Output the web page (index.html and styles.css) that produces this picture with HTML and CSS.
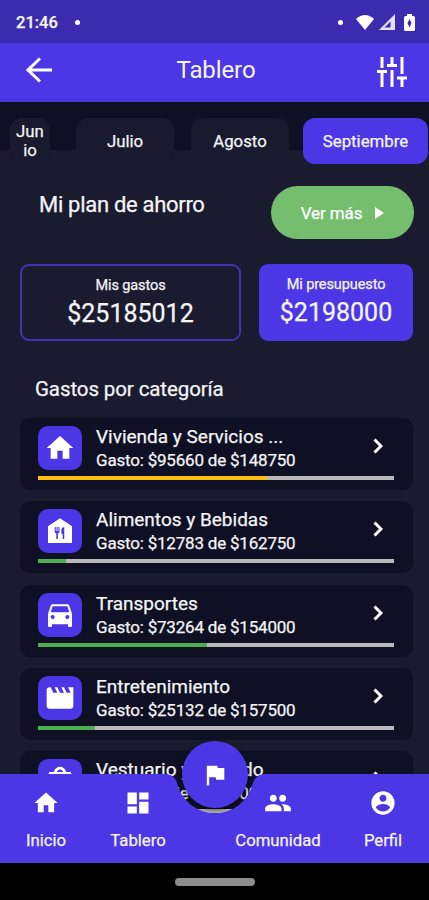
FILE: index.html
```html
<!DOCTYPE html>
<html lang="es">
<head>
    <meta charset="UTF-8">
    <meta name="viewport" content="width=device-width, initial-scale=1.0">
    <title>Tablero</title>
    <link rel="stylesheet" href="styles.css">
</head>
<body>

<!-- Status bar -->
<div class="status-bar">
    <span class="time">21:46</span>
    <span class="dot"></span>
    <span class="dot dot-right"></span>
    <svg class="wifi" viewBox="0 0 18 15"><path d="M9 15L0 4Q9-4 18 4Z"/></svg>
    <svg class="signal" viewBox="0 0 16 16"><path fill-rule="evenodd" d="M0 16L16 0V16ZM5.500 13.500H11.500V7.500Z"/></svg>
    <svg class="battery" viewBox="0 0 11 17"><path fill-rule="evenodd" d="M3 2V0H8V2H9.500Q11 2 11 3.500V15.500Q11 17 9.500 17H1.500Q0 17 0 15.500V3.500Q0 2 1.500 2ZM5.500 5L3.500 9L5.500 13.500L7.500 9Z"/></svg>
</div>

<!-- Header -->
<header>
    <svg class="back" viewBox="0 0 26 26"><path d="M26 13H2M14 1.500L2 13L14 24.500"/></svg>
    <h1>Tablero</h1>
    <svg class="filters" viewBox="0 0 30 30"><path d="M5 0V11M0 14.500H10M5 14.500V30M15 0V8M10 8.500H20M15 13V30M25 0V17M20 21H30M25 21V30"/></svg>
</header>

<!-- Months -->
<div class="months">
    <div class="month month-first">Jun<br>io</div>
    <div class="month">Julio</div>
    <div class="month">Agosto</div>
    <div class="month active">Septiembre</div>
</div>

<main>
    <div class="plan">
        <h2>Mi plan de ahorro</h2>
        <button class="more">Ver más <svg viewBox="0 0 9 12"><path d="M0 0L9 6L0 12Z"/></svg></button>
    </div>

    <div class="totals">
        <div class="total spent">
            <span class="total-label">Mis gastos</span>
            <span class="total-value">$25185012</span>
        </div>
        <div class="total budget">
            <span class="total-label">Mi presupuesto</span>
            <span class="total-value">$2198000</span>
        </div>
    </div>

    <h3>Gastos por categoría</h3>

    <!-- Categories -->
    <div class="categories">
        <div class="category">
            <div class="row">
                <div class="icon"><svg viewBox="0 0 24 24"><path d="M10 20v-6h4v6h5v-8h3L12 3 2 12h3v8z"/></svg></div>
                <div class="info">
                    <span class="name">Vivienda y Servicios ...</span>
                    <span class="amount">Gasto: $95660 de $148750</span>
                </div>
                <svg class="chevron" viewBox="0 0 10 16"><path d="M1.500 1.500L8 8L1.500 14.500"/></svg>
            </div>
            <div class="bar"><div class="fill warning" style="width: 64.3%"></div></div>
        </div>
        <div class="category">
            <div class="row">
                <div class="icon"><svg viewBox="0 0 24 24"><path fill-rule="evenodd" d="M12 2.500L3 8.500V21H21V8.500ZM8 9H8.800V12H9.400V9H10.200V12H10.800V9H11.600V12.500Q11.600 13.600 10.400 13.800V18H9.200V13.800Q8 13.600 8 12.500ZM15.200 9V18H14V14H13V11Q13.200 9.300 15.200 9Z"/></svg></div>
                <div class="info">
                    <span class="name">Alimentos y Bebidas</span>
                    <span class="amount">Gasto: $12783 de $162750</span>
                </div>
                <svg class="chevron" viewBox="0 0 10 16"><path d="M1.500 1.500L8 8L1.500 14.500"/></svg>
            </div>
            <div class="bar"><div class="fill" style="width: 7.9%"></div></div>
        </div>
        <div class="category">
            <div class="row">
                <div class="icon"><svg viewBox="0 0 24 24"><path d="M18.920 5.010C18.720 4.420 18.160 4 17.500 4h-11c-.66 0-1.210.42-1.420 1.010L3 11v9c0 .55.45 1 1 1h1c.55 0 1-.45 1-1v-1h12v1c0 .55.45 1 1 1h1c.55 0 1-.45 1-1v-9l-2.080-5.990zM6.500 15c-.83 0-1.500-.67-1.500-1.500S5.670 12 6.500 12s1.500.67 1.500 1.500S7.330 15 6.500 15zm11 0c-.83 0-1.500-.67-1.500-1.500s.67-1.500 1.500-1.500 1.500.67 1.500 1.500-.67 1.500-1.500 1.500zM5 10l1.500-4.500h11L19 10H5z"/></svg></div>
                <div class="info">
                    <span class="name">Transportes</span>
                    <span class="amount">Gasto: $73264 de $154000</span>
                </div>
                <svg class="chevron" viewBox="0 0 10 16"><path d="M1.500 1.500L8 8L1.500 14.500"/></svg>
            </div>
            <div class="bar"><div class="fill" style="width: 47.6%"></div></div>
        </div>
        <div class="category">
            <div class="row">
                <div class="icon"><svg viewBox="0 0 24 24"><path d="M18 4l2 4h-3l-2-4h-2l2 4h-3l-2-4H8l2 4H7L5 4H4c-1.100 0-1.990.9-1.990 2L2 18c0 1.100.9 2 2 2h16c1.100 0 2-.9 2-2V4h-4z"/></svg></div>
                <div class="info">
                    <span class="name">Entretenimiento</span>
                    <span class="amount">Gasto: $25132 de $157500</span>
                </div>
                <svg class="chevron" viewBox="0 0 10 16"><path d="M1.500 1.500L8 8L1.500 14.500"/></svg>
            </div>
            <div class="bar"><div class="fill" style="width: 16%"></div></div>
        </div>
        <div class="category">
            <div class="row">
                <div class="icon"><svg viewBox="0 0 24 24"><path fill-rule="evenodd" d="M19 5.300h-2.400C16 2.800 14.200 1.300 12 1.300S8 2.800 7.400 5.300H5c-1.100 0-1.500.4-1.500 1.200V20c0 1.100.9 2 2 2h13c1.100 0 2-.9 2-2V6.500c0-.8-.4-1.200-1.500-1.200zM12 3.300c1.100 0 2 .8 2.400 2H9.600c.4-1.200 1.300-2 2.400-2z"/></svg></div>
                <div class="info">
                    <span class="name">Vestuario y Calzado</span>
                    <span class="amount">Gasto: $0 de $105000</span>
                </div>
                <svg class="chevron" viewBox="0 0 10 16"><path d="M1.500 1.500L8 8L1.500 14.500"/></svg>
            </div>
            <div class="bar"><div class="fill" style="width: 0%"></div></div>
        </div>
    </div>
</main>

<!-- Bottom navigation -->
<div class="bottom">
    <button class="fab"><svg viewBox="0 0 24 24"><path d="M14.400 6L14 4H5v17h2v-7h5.600l.4 2h7V6z"/></svg></button>
    <svg class="nav-shape" viewBox="0 0 429 89"><path d="M0 0H163C172 0 175 3 177 9A39 39 0 0 0 253 9C255 3 258 0 267 0H429V89H0Z"/></svg>
    <nav>
        <a class="nav-home"><svg viewBox="0 0 24 24"><path d="M10 20v-6h4v6h5v-8h3L12 3 2 12h3v8z"/></svg>Inicio</a>
        <a class="nav-board"><svg viewBox="0 0 24 24"><path d="M3 13h8V3H3v10zm0 8h8v-6H3v6zm10 0h8V11h-8v10zm0-18v6h8V3h-8z"/></svg>Tablero</a>
        <a class="nav-people"><svg viewBox="0 0 24 24"><path d="M16 11c1.660 0 2.990-1.340 2.990-3S17.660 5 16 5c-1.660 0-3 1.340-3 3s1.340 3 3 3zm-8 0c1.660 0 2.990-1.340 2.990-3S9.660 5 8 5C6.340 5 5 6.340 5 8s1.340 3 3 3zm0 2c-2.330 0-7 1.170-7 3.500V19h14v-2.500c0-2.330-4.670-3.500-7-3.500zm8 0c-.29 0-.62.020-.97.050 1.160.84 1.970 1.970 1.970 3.450V19h6v-2.500c0-2.330-4.670-3.500-7-3.500z"/></svg>Comunidad</a>
        <a class="nav-profile"><svg viewBox="0 0 24 24"><path d="M12 2C6.480 2 2 6.480 2 12s4.480 10 10 10 10-4.480 10-10S17.520 2 12 2zm0 3c1.660 0 3 1.340 3 3s-1.340 3-3 3-3-1.340-3-3 1.340-3 3-3zm0 14.200c-2.500 0-4.710-1.280-6-3.220.03-1.990 4-3.080 6-3.080 1.990 0 5.970 1.090 6 3.080-1.290 1.940-3.500 3.220-6 3.220z"/></svg>Perfil</a>
    </nav>
    <div class="gesture"><div class="pill"></div></div>
</div>

</body>
</html>
```
FILE: styles.css
```css
* {
    margin: 0;
    padding: 0;
    box-sizing: border-box;
}
body {
    position: relative;
    height: 900px;
    overflow: hidden;
    font-family: Roboto, sans-serif;
    background-color: #1b1b2f;
    color: #f4f4f6;
    -webkit-text-stroke: 0.25px;
}
svg {
    display: block;
    fill: white;
}
h1, h2, h3 {
    font-weight: 400;
}
.status-bar {
    height: 43px;
    padding: 1px 14px 0 16px;
    display: flex;
    align-items: center;
    background-color: #3b2bae;
}
.time {
    width: 59px;
    font-size: 16.5px;
    font-weight: 500;
}
.dot {
    width: 5px;
    height: 5px;
    border-radius: 50%;
    background-color: white;
}
.dot-right {
    margin-left: auto;
    margin-right: 13px;
}
.wifi {
    width: 18px;
    height: 15px;
    margin-right: 5px;
}
.signal {
    width: 16px;
    height: 16px;
    margin-right: 9px;
    opacity: 0.85;
}
.battery {
    width: 11px;
    height: 17px;
}
header {
    height: 59px;
    padding: 0 22px 6px 26px;
    display: flex;
    justify-content: space-between;
    align-items: center;
    background-color: #4b37e6;
}
header h1 {
    font-size: 24px;
    letter-spacing: -0.1px;
    margin-left: 3px;
    -webkit-text-stroke: 0;
}
.back, .filters {
    fill: none;
    stroke: white;
    stroke-width: 3;
}
.back {
    width: 26px;
    height: 26px;
}
.filters {
    width: 30px;
    height: 30px;
    margin-top: 4px;
}
.months {
    height: 63px;
    padding: 16px 1px 0 10px;
    display: flex;
    background: linear-gradient(#0f1023 48px, #1b1b2f 48px);
}
.month {
    width: 98px;
    height: 46px;
    margin-right: 17px;
    display: flex;
    flex-shrink: 0;
    justify-content: center;
    align-items: center;
    text-align: center;
    font-size: 16.8px;
    line-height: 19px;
    border-radius: 12px;
    background-color: #191a2d;
}
.month-first {
    width: 40px;
    margin-right: 26px;
}
.month.active {
    width: 125px;
    margin-left: -3px;
    margin-right: 0;
    background-color: #4b37e6;
}
.plan {
    height: 74px;
    margin-top: 21px;
    padding: 0 15px 0 39px;
    display: flex;
    justify-content: space-between;
}
.plan h2 {
    font-size: 22px;
    letter-spacing: -0.3px;
    line-height: 38px;
}
.more {
    width: 143px;
    height: 53px;
    display: flex;
    justify-content: center;
    align-items: center;
    gap: 13px;
    font-family: inherit;
    font-size: 17px;
    letter-spacing: -0.1px;
    color: white;
    border: none;
    border-radius: 27px;
    background-color: #75be6e;
}
.more svg {
    width: 9px;
    height: 12px;
}
.totals {
    height: 77px;
    margin: 4px 16px 0 20px;
    display: flex;
    justify-content: space-between;
}
.total {
    display: flex;
    flex-direction: column;
    align-items: center;
    padding-top: 12px;
    border-radius: 9px;
}
.spent {
    width: 221px;
    padding-top: 11px;
    border: 2px solid #4332b4;
}
.budget {
    width: 154px;
    background-color: #4b37e6;
}
.total-label {
    font-size: 14.5px;
    letter-spacing: -0.1px;
    line-height: 18px;
}
.total-value {
    font-size: 25px;
    line-height: 37px;
}
h3 {
    margin: 35px 0 0 35px;
    font-size: 20.5px;
    letter-spacing: -0.1px;
    line-height: 26px;
}
.categories {
    margin: 16px 16px 0 20px;
    display: flex;
    flex-direction: column;
    gap: 11.3px;
}
.category {
    height: 72px;
    padding: 8px 19px 0 18px;
    border-radius: 10px;
    background-color: #0f1023;
}
.row {
    height: 50px;
    display: flex;
}
.icon {
    width: 44px;
    height: 44px;
    padding: 6px;
    border-radius: 10px;
    background-color: #4b37e6;
}
.info {
    flex: 1;
    margin-left: 14px;
    display: flex;
    flex-direction: column;
    white-space: nowrap;
}
.name {
    font-size: 19px;
    line-height: 22px;
}
.amount {
    font-size: 17px;
    letter-spacing: -0.2px;
    line-height: 24px;
}
.chevron {
    width: 10px;
    height: 16px;
    margin: 12px 11px 0 0;
    fill: none;
    stroke: white;
    stroke-width: 3;
}
.bar {
    height: 4px;
    background-color: #b9b9b9;
}
.fill {
    height: 100%;
    background-color: #4caf50;
}
.fill.warning {
    background-color: #fdc010;
}
.bottom {
    position: absolute;
    left: 0;
    right: 0;
    bottom: 0;
    height: 126px;
}
.nav-shape {
    position: absolute;
    top: 0;
    left: 0;
    width: 429px;
    height: 89px;
    fill: #4b37e6;
}
.fab {
    position: absolute;
    top: -33px;
    left: 182px;
    width: 66px;
    height: 67px;
    padding: 19px;
    border: none;
    border-radius: 50%;
    background-color: #4b37e6;
    box-shadow: 0 2px 5px rgba(0, 0, 0, 0.6);
}
nav {
    position: relative;
    height: 89px;
    padding: 15px 16px 0 18px;
    display: flex;
    font-size: 16.7px;
}
nav a {
    display: flex;
    flex-direction: column;
    align-items: center;
    gap: 14px;
}
nav svg {
    width: 28px;
    height: 28px;
}
.nav-home {
    width: 56px;
}
.nav-board {
    width: 80px;
    margin-left: 24px;
}
.nav-people {
    width: 100px;
    margin-left: 50px;
}
.nav-profile {
    width: 60px;
    margin-left: 25px;
}
.gesture {
    height: 37px;
    display: flex;
    justify-content: center;
    align-items: center;
    background-color: black;
}
.pill {
    width: 80px;
    height: 8px;
    border-radius: 4px;
    background-color: #8c8c8c;
}
```
